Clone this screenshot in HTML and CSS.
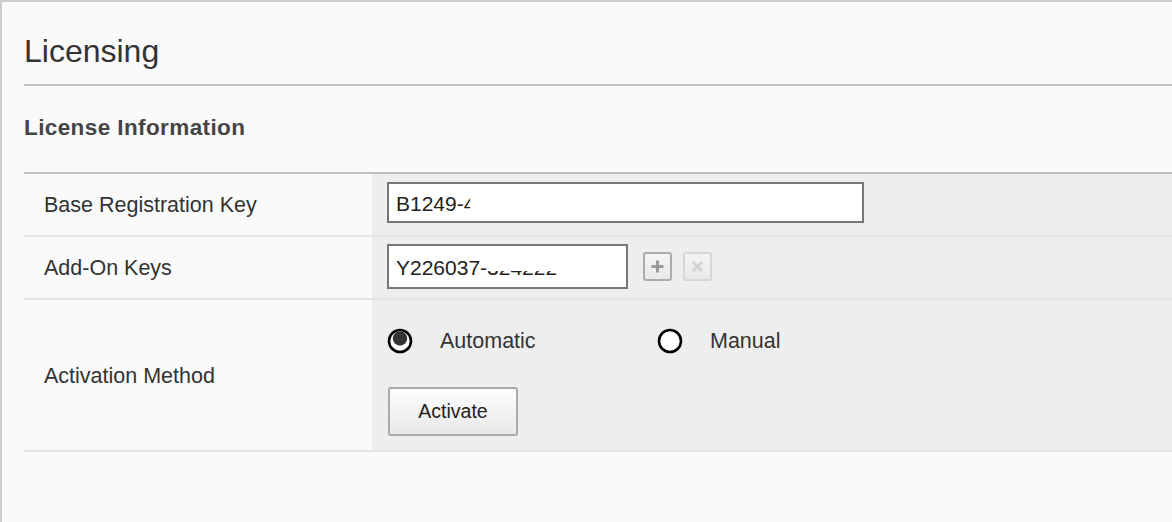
FILE: index.html
```html
<!DOCTYPE html>
<html>
<head>
<meta charset="utf-8">
<link rel="stylesheet" href="styles.css">
</head>
<body>
<div class="panel">
  <div class="page-header"><h1 class="title">Licensing</h1></div>
  <div class="section-header"><h2 class="subtitle">License Information</h2></div>
  <div class="form">
    <div class="row row-short">
      <div class="label">Base Registration Key</div>
      <div class="value value-1">
        <div class="field field-wide">B1249-<span class="clip-right">4</span></div>
      </div>
    </div>
    <div class="row row-short">
      <div class="label">Add-On Keys</div>
      <div class="value value-2">
        <div class="field field-narrow">Y226037-<span class="clip-top">324222</span></div>
        <span class="icon-btn icon-add">
          <svg width="15" height="15" viewBox="0 0 15 15"><path d="M7.5 1.5v12M1.5 7.5h12" stroke="#9a9a9a" stroke-width="3"/></svg>
        </span>
        <span class="icon-btn icon-remove">
          <svg width="13" height="13" viewBox="0 0 13 13"><path d="M2 2l9 9M11 2l-9 9" stroke="#d2d2d2" stroke-width="3"/></svg>
        </span>
      </div>
    </div>
    <div class="row row-tall">
      <div class="label">Activation Method</div>
      <div class="value value-3">
        <div class="options">
          <label class="option">
            <svg class="radio" width="26" height="26" viewBox="0 0 26 26"><circle cx="13" cy="13" r="11" fill="#fff" stroke="#000" stroke-width="2.6"/><circle cx="13" cy="10.5" r="7.2" fill="#333"/></svg>
            <span>Automatic</span>
          </label>
          <label class="option">
            <svg class="radio" width="26" height="26" viewBox="0 0 26 26"><circle cx="13" cy="13" r="11" fill="#fff" stroke="#000" stroke-width="2.6"/></svg>
            <span>Manual</span>
          </label>
        </div>
        <button class="btn">Activate</button>
      </div>
    </div>
  </div>
</div>
</body>
</html>
```

FILE: styles.css
```css
html, body {
  margin: 0;
  padding: 0;
  background: #fafafa;
  font-family: "Liberation Sans", Arial, sans-serif;
  color: #333;
}
.panel {
  height: 520px;
  border-top: 2px solid #cdcdcd;
  border-left: 2px solid #cdcdcd;
  padding-left: 22px;
  overflow: hidden;
}
.page-header {
  padding: 33px 0 17px;
  border-bottom: 2px solid #c0c0c0;
}
.title {
  margin: 0;
  font-size: 32px;
  line-height: 32px;
  font-weight: normal;
  color: #333;
}
.section-header {
  padding: 31px 0 33px;
  border-bottom: 2px solid #c0c0c0;
}
.subtitle {
  margin: 0;
  font-size: 22.5px;
  line-height: 22px;
  font-weight: bold;
  letter-spacing: 0.4px;
  color: #444;
}
.row {
  display: grid;
  grid-template-columns: 348px 1fr;
  border-bottom: 2px solid #e5e5e5;
}
.row-short { height: 61px; }
.row-tall { height: 150px; }
.label {
  display: flex;
  align-items: center;
  padding-left: 20px;
  padding-top: 2px;
  font-size: 21.5px;
  color: #333;
}
.value {
  background: #eeeeee;
  padding-left: 15px;
}
.value-1 { padding-top: 8px; }
.value-2 {
  padding-top: 7px;
  display: flex;
  align-items: flex-start;
}
.field {
  box-sizing: border-box;
  background: #fff;
  border: 2px solid #777;
  padding-left: 7px;
  font-size: 21px;
  color: #222;
  white-space: nowrap;
  overflow: hidden;
}
.field-wide {
  width: 477px;
  height: 41px;
  line-height: 39px;
}
.field-narrow {
  width: 241px;
  height: 45px;
  line-height: 43px;
}
.clip-right {
  display: inline-block;
  clip-path: inset(0 45% 0 0);
}
.clip-top {
  display: inline-block;
  clip-path: inset(58% 0 0 0);
}
.icon-btn {
  box-sizing: border-box;
  width: 29px;
  height: 29px;
  border-radius: 3px;
  display: flex;
  align-items: center;
  justify-content: center;
  background: linear-gradient(#f4f4f4, #e8e8e8);
  margin-top: 8px;
}
.icon-add {
  margin-left: 15px;
  border: 2px solid #acacac;
}
.icon-remove {
  margin-left: 11px;
  border: 2px solid #d6d6d6;
}
.value-3 {
  padding-top: 29px;
  padding-left: 16px;
}
.options {
  display: flex;
  height: 24px;
  align-items: center;
}
.option {
  width: 270px;
  display: flex;
  align-items: center;
  gap: 27px;
  font-size: 21.5px;
  color: #333;
}
.radio {
  display: block;
  margin-left: -1px;
}
.btn {
  display: block;
  margin-top: 34px;
  box-sizing: border-box;
  width: 130px;
  height: 49px;
  border: 2px solid #aaa;
  border-radius: 3px;
  background: linear-gradient(#fdfdfd, #e9e9e9);
  font-family: "Liberation Sans", Arial, sans-serif;
  font-size: 19.5px;
  color: #222;
  padding: 0;
}
```
